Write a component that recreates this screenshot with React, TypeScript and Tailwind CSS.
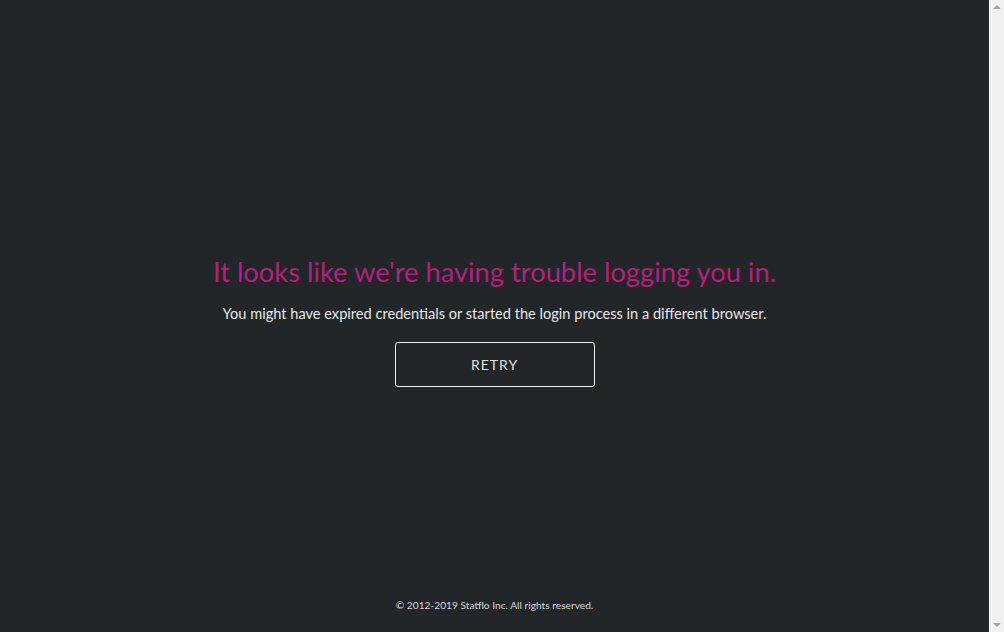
export default function App() {
  return (
    <div className="flex h-[632px] w-[1004px] overflow-hidden bg-[#222628] font-['Lato','Open_Sans',sans-serif]">
      <div className="flex w-[989px] flex-col items-center">
        <h1 className="mt-[256px] text-[27.3px] leading-[32px] font-normal text-[#b41f80]">
          It looks like we're having trouble logging you in.
        </h1>
        <p className="mt-[16px] text-[14.6px] leading-[20px] text-[#e8e8e8]">
          You might have expired credentials or started the login process in a different browser.
        </p>
        <button className="mt-[18px] h-[45px] w-[200px] rounded-[3px] border border-[#f0f0f0] text-[14px] tracking-[1px] text-[#e0e0e0]">
          RETRY
        </button>
        <div className="mt-auto mb-[21px] text-[10.2px] leading-[12px] text-[#d8d8d8]">
          © 2012-2019 Statflo Inc. All rights reserved.
        </div>
      </div>
      <div className="flex w-[15px] flex-col items-center justify-between bg-[#f1f1f1] py-[4px] text-[#a3a3a3]">
        <svg width="8" height="5" viewBox="0 0 8 5">
          <path d="M0 5 L4 1 L8 5 Z" fill="currentColor" />
        </svg>
        <svg width="8" height="5" viewBox="0 0 8 5">
          <path d="M0 0 L8 0 L4 4 Z" fill="currentColor" />
        </svg>
      </div>
    </div>
  );
}
